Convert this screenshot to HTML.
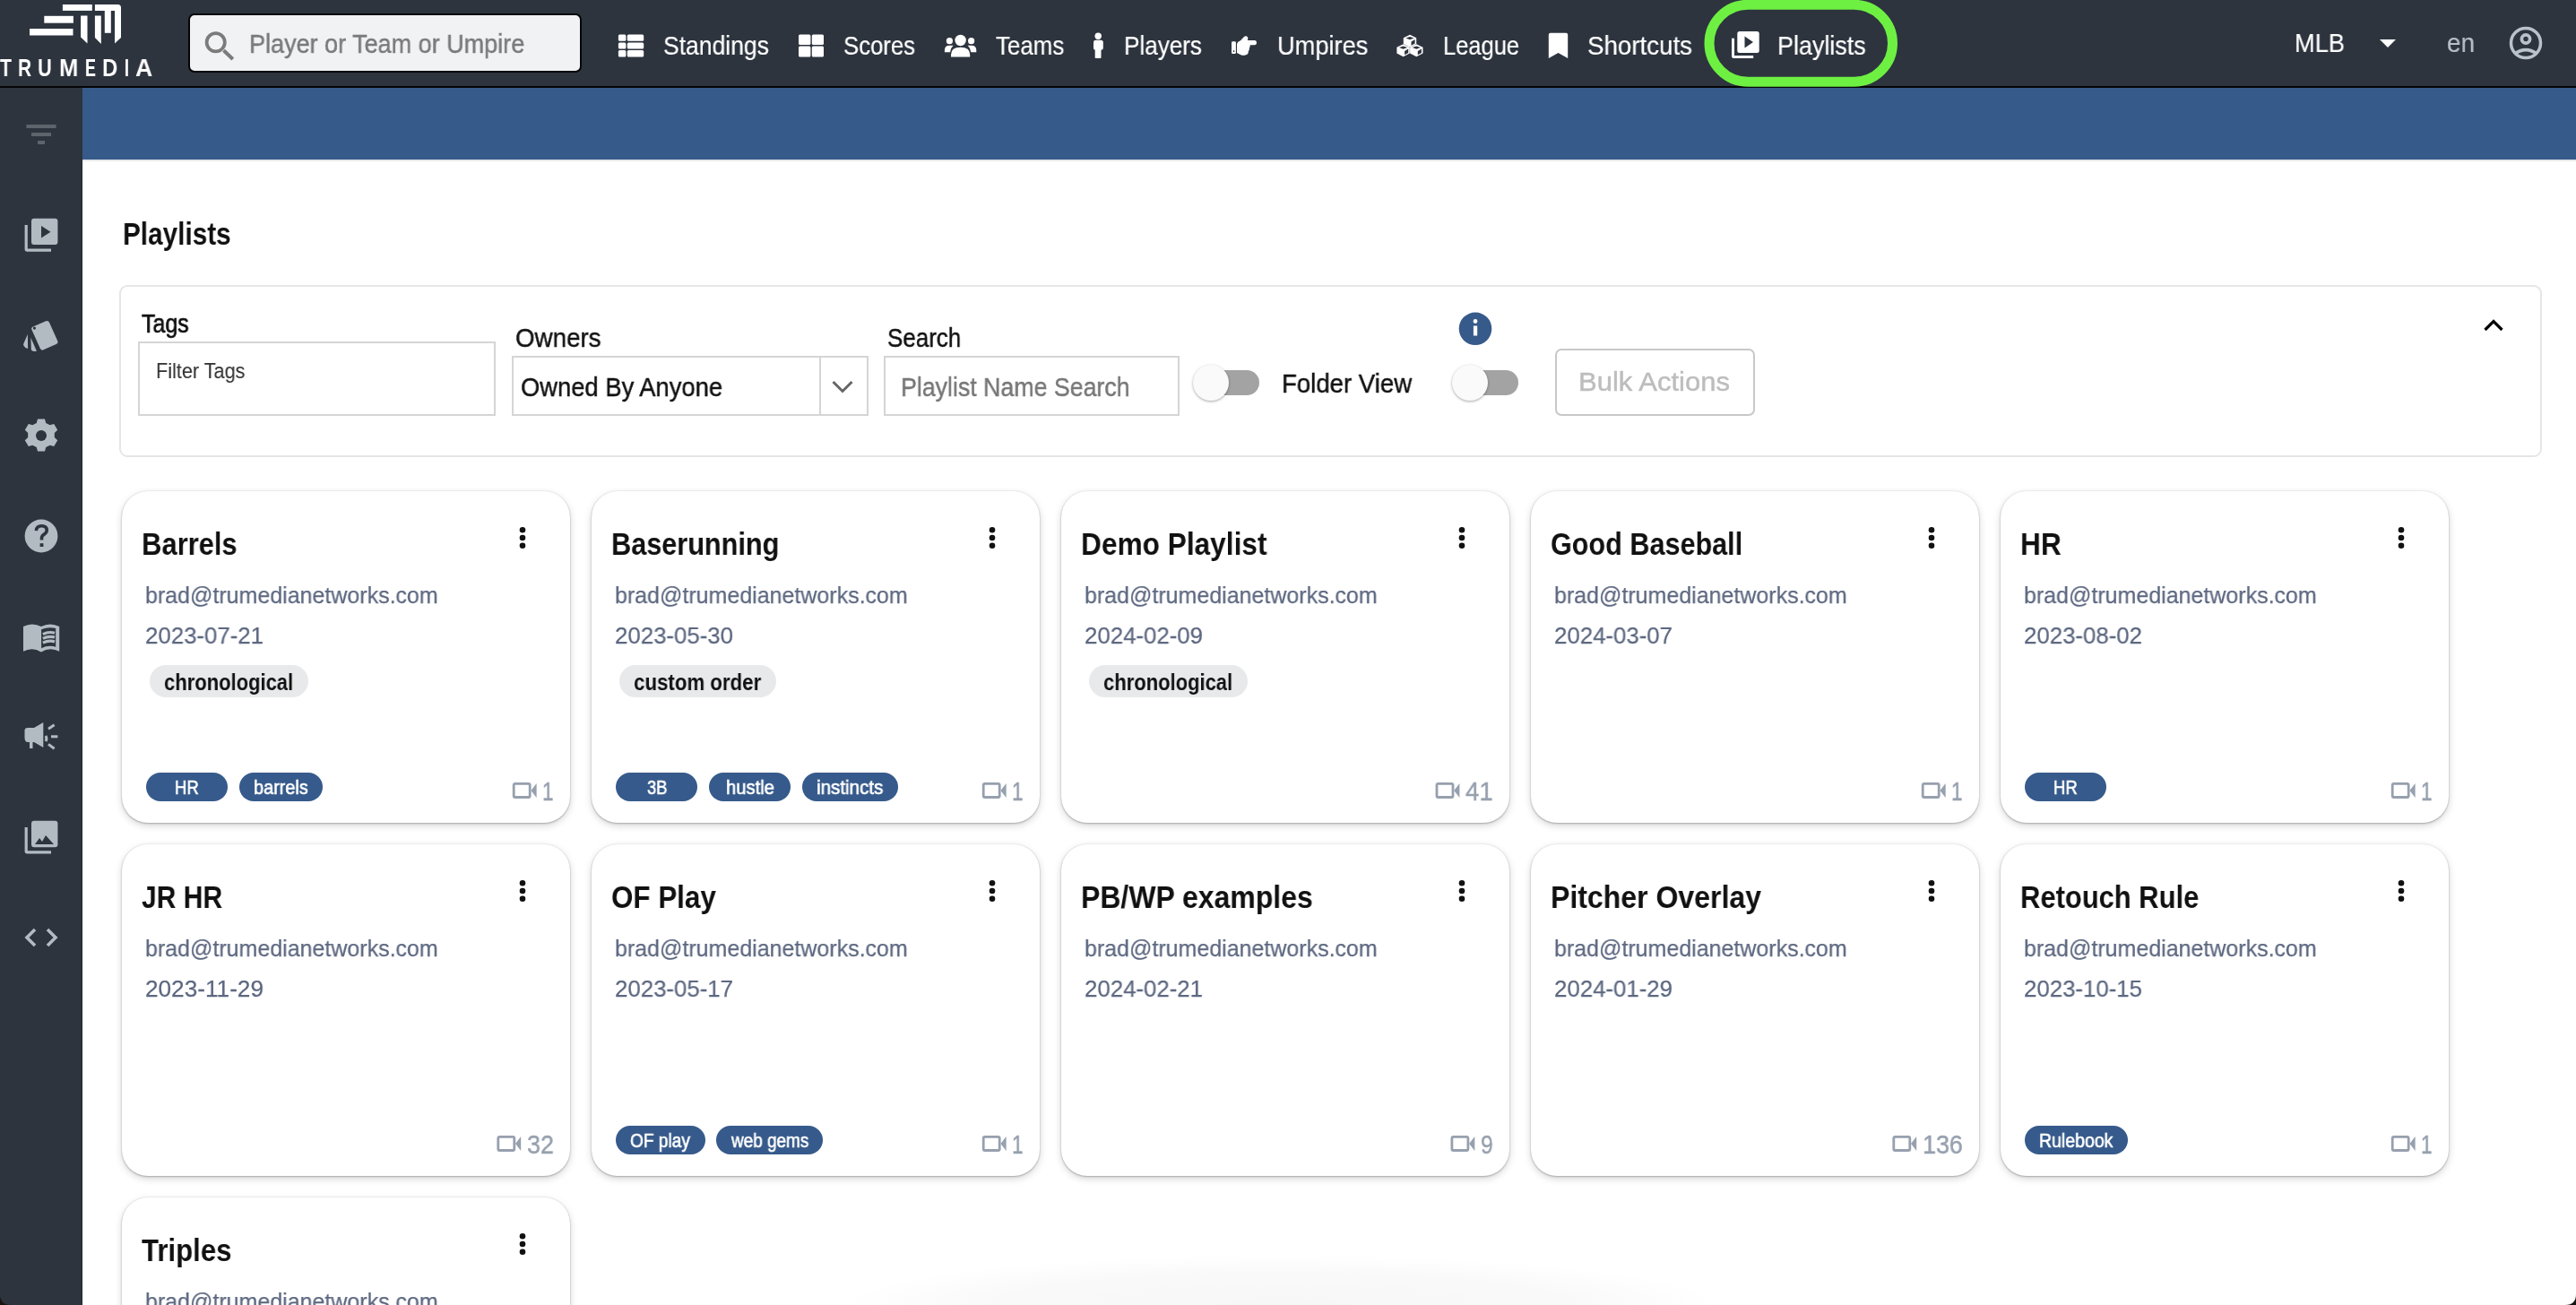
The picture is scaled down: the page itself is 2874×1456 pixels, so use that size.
<!DOCTYPE html><html><head><meta charset="utf-8"><style>
html,body{margin:0;padding:0;}
body{width:2874px;height:1456px;position:relative;overflow:hidden;background:#fff;font-family:"Liberation Sans",sans-serif;}
.t{position:absolute;white-space:nowrap;transform-origin:0 0;will-change:transform;}
.a{position:absolute;}
svg{position:absolute;overflow:visible;}
.card{position:absolute;width:500px;height:370px;border-radius:29px;background:#fff;box-shadow:0 1px 2px rgba(0,0,0,0.22),0 3px 9px rgba(0,0,0,0.17),0 0 2px rgba(0,0,0,0.12);}
.chip{position:absolute;height:32px;border-radius:16px;background:#365a8b;}
.ochip{position:absolute;height:36px;border-radius:18px;background:#e8e9eb;}
</style></head><body>

<div class="a" style="left:0;top:0;width:2874px;height:96px;background:#2d343e"></div>
<div class="a" style="left:0;top:96px;width:2874px;height:2px;background:#050505"></div>
<div class="a" style="left:0;top:98px;width:92px;height:1358px;background:#2d343e"></div>
<div class="a" style="left:91px;top:178px;width:1px;height:1278px;background:#1f2630"></div>
<div class="a" style="left:92px;top:98px;width:2782px;height:80px;background:#365a8a"></div>
<div class="a" style="left:92px;top:178px;width:2782px;height:2px;background:#e8e8e8"></div>
<svg style="left:0;top:0" width="180" height="96" viewBox="0 0 180 96">
<g fill="#fff">
<rect x="69.9" y="5" width="32.9" height="6.9"/>
<rect x="49.3" y="17.8" width="32.6" height="7.9"/>
<rect x="33" y="32" width="48.5" height="7.5"/>
<polygon points="90.1,17.4 97.5,17.4 97.5,48.6 90.1,41.6"/>
<polygon points="105.9,17.4 112.8,17.4 112.8,48.9 105.9,41.9"/>
<path d="M105.9,5 H131.5 Q135,5 135,8.5 V41.9 L128,48.6 V11.9 H105.9 Z"/>
<rect x="116.8" y="11.9" width="7" height="24.9"/>
</g>

</svg>
<div class="t" style="left:0.00px;top:62.00px;font-size:28px;line-height:28px;color:#fff;font-weight:bold;transform:scaleX(0.7544);">T</div>
<div class="t" style="left:19.50px;top:62.00px;font-size:28px;line-height:28px;color:#fff;font-weight:bold;transform:scaleX(0.7475);">R</div>
<div class="t" style="left:42.00px;top:62.00px;font-size:28px;line-height:28px;color:#fff;font-weight:bold;transform:scaleX(0.7772);">U</div>
<div class="t" style="left:65.70px;top:62.00px;font-size:28px;line-height:28px;color:#fff;font-weight:bold;transform:scaleX(0.9142);">M</div>
<div class="t" style="left:95.10px;top:62.00px;font-size:28px;line-height:28px;color:#fff;font-weight:bold;transform:scaleX(0.6364);">E</div>
<div class="t" style="left:114.40px;top:62.00px;font-size:28px;line-height:28px;color:#fff;font-weight:bold;transform:scaleX(0.8564);">D</div>
<div class="t" style="left:139.00px;top:62.00px;font-size:28px;line-height:28px;color:#fff;font-weight:bold;transform:scaleX(0.6154);">I</div>
<div class="t" style="left:150.80px;top:62.00px;font-size:28px;line-height:28px;color:#fff;font-weight:bold;transform:scaleX(0.9505);">A</div>
<div class="a" style="left:210px;top:15px;width:435px;height:62px;border:2px solid #050505;border-radius:7px;background:#f1f2f4"></div>
<svg style="left:0;top:0" width="10" height="10">
<circle cx="240.7" cy="47.3" r="10.1" fill="none" stroke="#7b7b7b" stroke-width="3.7"/>
<line x1="249.5" y1="56.3" x2="259.8" y2="66" stroke="#7b7b7b" stroke-width="4"/>
</svg>
<div class="t" style="left:277.80px;top:34.00px;font-size:29.5px;line-height:29.5px;color:#7a7a7a;-webkit-text-stroke:0.45px #7a7a7a;transform:scaleX(0.9156);">Player or Team or Umpire</div>
<svg style="left:0;top:0" width="10" height="10"><g fill="#ffffff">
<rect x="689.9" y="38.6" width="8.5" height="7.1" rx="1.5"/><rect x="699.8" y="38.6" width="18.4" height="7.1" rx="1.5"/>
<rect x="689.9" y="47.4" width="8.5" height="7.1" rx="1.5"/><rect x="699.8" y="47.4" width="18.4" height="7.1" rx="1.5"/>
<rect x="689.9" y="56.1" width="8.5" height="7.3" rx="1.5"/><rect x="699.8" y="56.1" width="18.4" height="7.3" rx="1.5"/>
<rect x="891" y="38.6" width="13.4" height="11.4" rx="1.5"/><rect x="905.8" y="38.6" width="13.2" height="11.4" rx="1.5"/>
<rect x="891" y="51.6" width="13.4" height="11.8" rx="1.5"/><rect x="905.8" y="51.6" width="13.2" height="11.8" rx="1.5"/>
<circle cx="1071.6" cy="45" r="6.2"/><circle cx="1059.4" cy="45.7" r="3.6"/><circle cx="1083.6" cy="45.7" r="3.6"/>
<path d="M1061,63.6 V61 Q1061,52.8 1071.6,52.8 Q1082.2,52.8 1082.2,61 V63.6 Z"/>
<path d="M1053.9,58.3 V56 Q1053.9,50.7 1059.5,50.7 L1063.5,50.7 Q1060.5,53.5 1060,58.3 Z"/>
<path d="M1089.3,58.3 V56 Q1089.3,50.7 1083.7,50.7 L1079.7,50.7 Q1082.7,53.5 1083.2,58.3 Z"/>
<circle cx="1225.2" cy="40.2" r="3.7"/>
<rect x="1220" y="44.7" width="10.8" height="11.1" rx="2.5"/><rect x="1221.7" y="50" width="6.8" height="14.9" rx="1"/>
<rect x="1374" y="46.3" width="4.9" height="13.6" rx="1.2"/>
<path d="M1380,49 Q1380.5,46.5 1384,45.3 L1388,41 Q1389.5,39.7 1391,40.4 Q1393.2,41.8 1391.8,45 L1400,45 Q1402,45.2 1402,47.6 Q1402,50.2 1399.5,50.2 L1394.7,50.2 Q1395,52.5 1393.8,53.8 Q1394.2,56 1392.8,57.2 Q1393,60.5 1390,61.3 Q1387.5,62.2 1385,61.5 L1380,59 Z"/>
<path d="M1727.8,38.7 Q1727.8,36.7 1729.8,36.7 H1747.2 Q1749.2,36.7 1749.2,38.7 V64.9 L1738.5,58.9 L1727.8,64.9 Z"/>
<rect x="1938.3" y="35" width="24.4" height="23.9" rx="2.5"/>
<path d="M1932,42.7 h3 v19.2 h21.2 v3 h-21.7 q-2.5,0 -2.5,-2.5 z"/>
</g>
<circle cx="1376.5" cy="57.1" r="0.9" fill="#2d343e"/>
<polygon points="1946.5,40.5 1946.5,53.5 1956,47" fill="#2d343e"/>
<polygon points="1573,38.7 1580.2,42.300000000000004 1580.2,49.1 1573,52.7 1565.8,49.1 1565.8,42.300000000000004" fill="#fff"/><polygon points="1568.4,42.6 1573,41.0 1577.6,42.6 1573,44.300000000000004" fill="#2d343e"/><polygon points="1574.5,46.400000000000006 1578.6,44.1 1578.6,48.6 1574.5,50.7" fill="#2d343e"/><polygon points="1565.6,49.2 1572.8,52.800000000000004 1572.8,59.6 1565.6,63.2 1558.3999999999999,59.6 1558.3999999999999,52.800000000000004" fill="#fff"/><polygon points="1561.0,53.1 1565.6,51.5 1570.1999999999998,53.1 1565.6,54.800000000000004" fill="#2d343e"/><polygon points="1567.1,56.900000000000006 1571.1999999999998,54.6 1571.1999999999998,59.1 1567.1,61.2" fill="#2d343e"/><polygon points="1580.3,49.2 1587.5,52.800000000000004 1587.5,59.6 1580.3,63.2 1573.1,59.6 1573.1,52.800000000000004" fill="#fff"/><polygon points="1575.7,53.1 1580.3,51.5 1584.8999999999999,53.1 1580.3,54.800000000000004" fill="#2d343e"/><polygon points="1581.8,56.900000000000006 1585.8999999999999,54.6 1585.8999999999999,59.1 1581.8,61.2" fill="#2d343e"/>
<rect x="1907" y="5.3" width="204.5" height="86" rx="43" fill="none" stroke="#6ef043" stroke-width="11"/>
<polygon points="2655,44 2673,44 2664,53" fill="#fff"/>
<circle cx="2818" cy="48" r="16.5" fill="none" stroke="#b9c2ca" stroke-width="3.5"/>
<circle cx="2818" cy="43.5" r="4.6" fill="none" stroke="#b9c2ca" stroke-width="3.7"/>
<path d="M2806,59.8 Q2818,51.5 2830,59.8" fill="none" stroke="#b9c2ca" stroke-width="3.5"/>
</svg>
<div class="t" style="left:739.70px;top:36.00px;font-size:29.5px;line-height:29.5px;color:#fff;-webkit-text-stroke:0.2px #fff;transform:scaleX(0.8986);">Standings</div>
<div class="t" style="left:941.00px;top:36.00px;font-size:29.5px;line-height:29.5px;color:#fff;-webkit-text-stroke:0.2px #fff;transform:scaleX(0.8715);">Scores</div>
<div class="t" style="left:1110.70px;top:36.00px;font-size:29.5px;line-height:29.5px;color:#fff;-webkit-text-stroke:0.2px #fff;transform:scaleX(0.8769);">Teams</div>
<div class="t" style="left:1253.50px;top:36.00px;font-size:29.5px;line-height:29.5px;color:#fff;-webkit-text-stroke:0.2px #fff;transform:scaleX(0.8841);">Players</div>
<div class="t" style="left:1424.70px;top:36.00px;font-size:29.5px;line-height:29.5px;color:#fff;-webkit-text-stroke:0.2px #fff;transform:scaleX(0.9226);">Umpires</div>
<div class="t" style="left:1610.00px;top:36.00px;font-size:29.5px;line-height:29.5px;color:#fff;-webkit-text-stroke:0.2px #fff;transform:scaleX(0.8638);">League</div>
<div class="t" style="left:1771.40px;top:36.00px;font-size:29.5px;line-height:29.5px;color:#fff;-webkit-text-stroke:0.2px #fff;transform:scaleX(0.9390);">Shortcuts</div>
<div class="t" style="left:1983.20px;top:36.00px;font-size:29.5px;line-height:29.5px;color:#fff;-webkit-text-stroke:0.2px #fff;transform:scaleX(0.9113);">Playlists</div>
<div class="t" style="left:2560.00px;top:34.00px;font-size:29px;line-height:29px;color:#fff;-webkit-text-stroke:0.15px #fff;transform:scaleX(0.9396);">MLB</div>
<div class="t" style="left:2730.00px;top:34.00px;font-size:29px;line-height:29px;color:#b9c2ca;-webkit-text-stroke:0.15px #b9c2ca;transform:scaleX(0.9598);">en</div>
<svg style="left:0;top:0" width="10" height="10">
<g fill="#5d646c"><rect x="29.4" y="139" width="33.2" height="4"/><rect x="35" y="148" width="22" height="4"/><rect x="42" y="157" width="8" height="4"/></g>
<g fill="#b3bbc2">
<rect x="35" y="243.7" width="29.4" height="29.3" rx="3"/>
<path d="M27.6,251 h3.2 v26.5 h26.2 v3.2 h-26.7 q-2.7,0 -2.7,-2.7 z"/>
<path d="M35.6,368.2 Q34.2,365.8 36.8,364.6 L51.2,358.3 Q53.8,357.2 55,359.7 L64.2,380.2 Q65.3,382.8 62.7,384 L48.5,390.3 Q45.9,391.4 44.8,388.8 Z"/>
<path d="M30.9,373 L31.1,389.1 Q27.5,388 26.3,385.5 Q25.8,384.3 26.6,382.8 Z"/>
<path d="M34.4,376.8 L40.9,391.8 Q37,392.2 35.6,391.2 Q34.8,390.6 34.8,389.5 Z"/>
<circle cx="46" cy="598" r="18.4"/>
<path d="M26,699 Q36,694 45.9,699 Q56,694 66.2,699 V726.8 Q56,721.5 45.9,727.4 Q36,721.5 26,726.8 Z"/>
<path d="M27.5,815 Q27.5,812 31,812 H38 L48.3,806 V834 L38,828 H36.5 V835 H33 V828 H31 Q27.5,828 27.5,823 Z"/>
<rect x="35" y="915.7" width="29.4" height="29.6" rx="3"/>
<path d="M27.6,923 h3.2 v26.3 h26.2 v3.2 h-26.7 q-2.7,0 -2.7,-2.7 z"/>
</g>
<polygon points="46,252 46,265.5 56.5,258.7" fill="#2d343e"/>
<circle cx="38.4" cy="366.1" r="1.6" fill="#2d343e"/>
<path d="M40.3,592.2 Q40.8,586.8 46.5,586.8 Q52.2,586.8 52.2,591.6 Q52.2,594.6 49,596.4 Q46.5,597.8 46.5,600.5 V602.5" fill="none" stroke="#2d343e" stroke-width="3.6"/>
<rect x="44.6" y="606.2" width="3.8" height="3.8" fill="#2d343e"/>
<path d="M46.1,702.3 Q54,698.8 62.2,701 V721.7 Q54,719.2 46.1,723.2 Z" fill="#2d343e"/>
<g stroke="#b3bbc2" stroke-width="3.2" fill="none"><path d="M47.9,707.6 Q54.5,704.2 61,706.3 M47.9,712.4 Q54.5,709 61,711.1 M47.9,717.2 Q54.5,713.8 61,715.9"/></g>
<g stroke="#b3bbc2" stroke-width="3" fill="none">
<path d="M51,821 a4,5 0 0 1 0,6" />
<line x1="54" y1="813.2" x2="60.6" y2="808.8"/><line x1="57" y1="821.8" x2="64.4" y2="821.8"/><line x1="54" y1="830.4" x2="60.6" y2="835.2"/>
<path d="M39,1037 L30,1046 L39,1055 M53,1037 L62,1046 L53,1055" stroke-width="3.6"/>
</g>
<polygon points="39,942 44,935 47,939 51,932 60,942" fill="#2d343e"/>
<g transform="translate(46,486)">
<path fill="#b3bbc2" d="M-4,-18.5 h8 l1.2,4.5 l4.5,2.3 l4.5,-1.4 l4,6.9 l-3.4,3.1 v5.2 l3.4,3.1 l-4,6.9 l-4.5,-1.4 l-4.5,2.3 l-1.2,4.5 h-8 l-1.2,-4.5 l-4.5,-2.3 l-4.5,1.4 l-4,-6.9 l3.4,-3.1 v-5.2 l-3.4,-3.1 l4,-6.9 l4.5,1.4 l4.5,-2.3 z"/>
<circle r="6" fill="#2d343e"/>
</g>
</svg>
<div class="t" style="left:137.00px;top:243.00px;font-size:35px;line-height:35px;color:#111;font-weight:bold;transform:scaleX(0.8493);">Playlists</div>
<div class="a" style="left:133px;top:317.5px;width:2698.5px;height:188.5px;border:2px solid #e6e6e6;border-radius:9px"></div>
<div class="t" style="left:158.10px;top:346.00px;font-size:29.5px;line-height:29.5px;color:#111;-webkit-text-stroke:0.7px #111;transform:scaleX(0.8459);">Tags</div>
<div class="a" style="left:154.4px;top:381.4px;width:395px;height:79px;border:2px solid #d5d5d5"></div>
<div class="t" style="left:173.70px;top:402.00px;font-size:24.5px;line-height:24.5px;color:#333;-webkit-text-stroke:0.1px #333;transform:scaleX(0.8837);">Filter Tags</div>
<div class="t" style="left:574.80px;top:362.00px;font-size:30px;line-height:30px;color:#111;-webkit-text-stroke:0.45px #111;transform:scaleX(0.9255);">Owners</div>
<div class="a" style="left:570.8px;top:397.4px;width:394.5px;height:62.8px;border:2px solid #d5d5d5"></div>
<div class="a" style="left:914px;top:399px;width:2px;height:63px;background:#d5d5d5"></div>
<svg style="left:0;top:0" width="10" height="10"><path d="M929.5,426 L940,436.5 L950.5,426" fill="none" stroke="#666" stroke-width="3"/></svg>
<div class="t" style="left:581.00px;top:417.00px;font-size:30px;line-height:30px;color:#111;-webkit-text-stroke:0.45px #111;transform:scaleX(0.9117);">Owned By Anyone</div>
<div class="t" style="left:990.40px;top:362.00px;font-size:30px;line-height:30px;color:#111;-webkit-text-stroke:0.45px #111;transform:scaleX(0.8654);">Search</div>
<div class="a" style="left:986.3px;top:397.4px;width:326px;height:62.8px;border:2px solid #d5d5d5"></div>
<div class="t" style="left:1005.00px;top:417.00px;font-size:30px;line-height:30px;color:#777;-webkit-text-stroke:0.45px #777;transform:scaleX(0.8912);">Playlist Name Search</div>
<div class="a" style="left:1346px;top:413px;width:59px;height:28px;border-radius:14px;background:#a3a3a3"></div>
<div class="a" style="left:1331px;top:406.6px;width:40px;height:40px;border-radius:20px;background:#fafafa;box-shadow:0 1px 3px rgba(0,0,0,0.35)"></div>
<div class="a" style="left:1635px;top:413px;width:59px;height:28px;border-radius:14px;background:#a3a3a3"></div>
<div class="a" style="left:1620px;top:406.6px;width:40px;height:40px;border-radius:20px;background:#fafafa;box-shadow:0 1px 3px rgba(0,0,0,0.35)"></div>
<div class="t" style="left:1430.00px;top:413.00px;font-size:30px;line-height:30px;color:#111;-webkit-text-stroke:0.45px #111;transform:scaleX(0.9196);">Folder View</div>
<svg style="left:0;top:0" width="10" height="10"><circle cx="1646" cy="366.8" r="18.3" fill="#365a8a"/><rect x="1643.9" y="363.5" width="4.3" height="11" fill="#fff"/><circle cx="1646" cy="358.5" r="2.4" fill="#fff"/></svg>
<div class="a" style="left:1734.5px;top:389.4px;width:219px;height:70.7px;border:2px solid #c8c8c8;border-radius:7px"></div>
<div class="t" style="left:1761.40px;top:411.00px;font-size:30px;line-height:30px;color:#bdbdbd;-webkit-text-stroke:0.45px #bdbdbd;transform:scaleX(1.0343);">Bulk Actions</div>
<svg style="left:0;top:0" width="10" height="10"><path d="M2772.5,368 L2782,358.5 L2791.5,368" fill="none" stroke="#000" stroke-width="3.2"/></svg>
<div class="card" style="left:136px;top:547.5px"></div>
<div class="t" style="left:158.30px;top:590.00px;font-size:35.5px;line-height:35.5px;color:#111;font-weight:bold;transform:scaleX(0.8717);">Barrels</div>
<svg style="left:0;top:0" width="10" height="10"><g fill="#111"><circle cx="583" cy="591.3" r="3.3"/><circle cx="583" cy="600.0" r="3.3"/><circle cx="583" cy="608.7" r="3.3"/></g></svg>
<div class="t" style="left:162.00px;top:651.00px;font-size:26px;line-height:26px;color:#5d6880;-webkit-text-stroke:0.25px #5d6880;transform:scaleX(0.9609);">brad@trumedianetworks.com</div>
<div class="t" style="left:162.00px;top:696.00px;font-size:26px;line-height:26px;color:#5d6880;-webkit-text-stroke:0.25px #5d6880;transform:scaleX(0.9925);">2023-07-21</div>
<div class="ochip" style="left:166.9px;top:742.0px;width:177.1px"></div>
<div class="t" style="left:183.40px;top:749.00px;font-size:25px;line-height:25px;color:#111;font-weight:bold;transform:scaleX(0.8792);">chronological</div>
<div class="chip" style="left:162.9px;top:862.0px;width:91.6px"></div>
<div class="t" style="left:195.30px;top:869.00px;font-size:21.5px;line-height:21.5px;color:#fff;-webkit-text-stroke:0.6px #fff;transform:scaleX(0.8617);">HR</div>
<div class="chip" style="left:266.7px;top:862.0px;width:93.7px"></div>
<div class="t" style="left:283.20px;top:869.00px;font-size:21.5px;line-height:21.5px;color:#fff;-webkit-text-stroke:0.6px #fff;transform:scaleX(0.9239);">barrels</div>
<div class="t" style="left:605.40px;top:868.00px;font-size:30px;line-height:30px;color:#97a0ae;-webkit-text-stroke:0.45px #97a0ae;transform:scaleX(0.7485);">1</div>
<svg style="left:0;top:0" width="10" height="10"><rect x="573.2" y="874.4" width="18" height="15.1" rx="1.6" fill="none" stroke="#97a0ae" stroke-width="2.8"/><polygon points="592.4,882.0 598.6,873.9 598.6,889.9" fill="#97a0ae"/></svg>
<div class="card" style="left:660px;top:547.5px"></div>
<div class="t" style="left:682.30px;top:590.00px;font-size:35.5px;line-height:35.5px;color:#111;font-weight:bold;transform:scaleX(0.8636);">Baserunning</div>
<svg style="left:0;top:0" width="10" height="10"><g fill="#111"><circle cx="1107" cy="591.3" r="3.3"/><circle cx="1107" cy="600.0" r="3.3"/><circle cx="1107" cy="608.7" r="3.3"/></g></svg>
<div class="t" style="left:686.00px;top:651.00px;font-size:26px;line-height:26px;color:#5d6880;-webkit-text-stroke:0.25px #5d6880;transform:scaleX(0.9609);">brad@trumedianetworks.com</div>
<div class="t" style="left:686.00px;top:696.00px;font-size:26px;line-height:26px;color:#5d6880;-webkit-text-stroke:0.25px #5d6880;transform:scaleX(0.9925);">2023-05-30</div>
<div class="ochip" style="left:690.9px;top:742.0px;width:175.3px"></div>
<div class="t" style="left:707.40px;top:749.00px;font-size:25px;line-height:25px;color:#111;font-weight:bold;transform:scaleX(0.8905);">custom order</div>
<div class="chip" style="left:686.9px;top:862.0px;width:91.6px"></div>
<div class="t" style="left:721.50px;top:869.00px;font-size:21.5px;line-height:21.5px;color:#fff;-webkit-text-stroke:0.6px #fff;transform:scaleX(0.8517);">3B</div>
<div class="chip" style="left:790.7px;top:862.0px;width:91.6px"></div>
<div class="t" style="left:809.60px;top:869.00px;font-size:21.5px;line-height:21.5px;color:#fff;-webkit-text-stroke:0.6px #fff;transform:scaleX(0.9373);">hustle</div>
<div class="chip" style="left:894.5px;top:862.0px;width:107.3px"></div>
<div class="t" style="left:911.00px;top:869.00px;font-size:21.5px;line-height:21.5px;color:#fff;-webkit-text-stroke:0.6px #fff;transform:scaleX(0.9562);">instincts</div>
<div class="t" style="left:1129.40px;top:868.00px;font-size:30px;line-height:30px;color:#97a0ae;-webkit-text-stroke:0.45px #97a0ae;transform:scaleX(0.7485);">1</div>
<svg style="left:0;top:0" width="10" height="10"><rect x="1097.2" y="874.4" width="18" height="15.1" rx="1.6" fill="none" stroke="#97a0ae" stroke-width="2.8"/><polygon points="1116.4,882.0 1122.6,873.9 1122.6,889.9" fill="#97a0ae"/></svg>
<div class="card" style="left:1184px;top:547.5px"></div>
<div class="t" style="left:1206.30px;top:590.00px;font-size:35.5px;line-height:35.5px;color:#111;font-weight:bold;transform:scaleX(0.8909);">Demo Playlist</div>
<svg style="left:0;top:0" width="10" height="10"><g fill="#111"><circle cx="1631" cy="591.3" r="3.3"/><circle cx="1631" cy="600.0" r="3.3"/><circle cx="1631" cy="608.7" r="3.3"/></g></svg>
<div class="t" style="left:1210.00px;top:651.00px;font-size:26px;line-height:26px;color:#5d6880;-webkit-text-stroke:0.25px #5d6880;transform:scaleX(0.9609);">brad@trumedianetworks.com</div>
<div class="t" style="left:1210.00px;top:696.00px;font-size:26px;line-height:26px;color:#5d6880;-webkit-text-stroke:0.25px #5d6880;transform:scaleX(0.9925);">2024-02-09</div>
<div class="ochip" style="left:1214.9px;top:742.0px;width:177.1px"></div>
<div class="t" style="left:1231.40px;top:749.00px;font-size:25px;line-height:25px;color:#111;font-weight:bold;transform:scaleX(0.8792);">chronological</div>
<div class="t" style="left:1635.20px;top:868.00px;font-size:30px;line-height:30px;color:#97a0ae;-webkit-text-stroke:0.45px #97a0ae;transform:scaleX(0.9192);">41</div>
<svg style="left:0;top:0" width="10" height="10"><rect x="1603.0" y="874.4" width="18" height="15.1" rx="1.6" fill="none" stroke="#97a0ae" stroke-width="2.8"/><polygon points="1622.2,882.0 1628.4,873.9 1628.4,889.9" fill="#97a0ae"/></svg>
<div class="card" style="left:1708px;top:547.5px"></div>
<div class="t" style="left:1730.30px;top:590.00px;font-size:35.5px;line-height:35.5px;color:#111;font-weight:bold;transform:scaleX(0.8616);">Good Baseball</div>
<svg style="left:0;top:0" width="10" height="10"><g fill="#111"><circle cx="2155" cy="591.3" r="3.3"/><circle cx="2155" cy="600.0" r="3.3"/><circle cx="2155" cy="608.7" r="3.3"/></g></svg>
<div class="t" style="left:1734.00px;top:651.00px;font-size:26px;line-height:26px;color:#5d6880;-webkit-text-stroke:0.25px #5d6880;transform:scaleX(0.9609);">brad@trumedianetworks.com</div>
<div class="t" style="left:1734.00px;top:696.00px;font-size:26px;line-height:26px;color:#5d6880;-webkit-text-stroke:0.25px #5d6880;transform:scaleX(0.9925);">2024-03-07</div>
<div class="t" style="left:2177.40px;top:868.00px;font-size:30px;line-height:30px;color:#97a0ae;-webkit-text-stroke:0.45px #97a0ae;transform:scaleX(0.7485);">1</div>
<svg style="left:0;top:0" width="10" height="10"><rect x="2145.2" y="874.4" width="18" height="15.1" rx="1.6" fill="none" stroke="#97a0ae" stroke-width="2.8"/><polygon points="2164.4,882.0 2170.6,873.9 2170.6,889.9" fill="#97a0ae"/></svg>
<div class="card" style="left:2232px;top:547.5px"></div>
<div class="t" style="left:2254.30px;top:590.00px;font-size:35.5px;line-height:35.5px;color:#111;font-weight:bold;transform:scaleX(0.8908);">HR</div>
<svg style="left:0;top:0" width="10" height="10"><g fill="#111"><circle cx="2679" cy="591.3" r="3.3"/><circle cx="2679" cy="600.0" r="3.3"/><circle cx="2679" cy="608.7" r="3.3"/></g></svg>
<div class="t" style="left:2258.00px;top:651.00px;font-size:26px;line-height:26px;color:#5d6880;-webkit-text-stroke:0.25px #5d6880;transform:scaleX(0.9609);">brad@trumedianetworks.com</div>
<div class="t" style="left:2258.00px;top:696.00px;font-size:26px;line-height:26px;color:#5d6880;-webkit-text-stroke:0.25px #5d6880;transform:scaleX(0.9925);">2023-08-02</div>
<div class="chip" style="left:2258.9px;top:862.0px;width:91.6px"></div>
<div class="t" style="left:2291.30px;top:869.00px;font-size:21.5px;line-height:21.5px;color:#fff;-webkit-text-stroke:0.6px #fff;transform:scaleX(0.8617);">HR</div>
<div class="t" style="left:2701.40px;top:868.00px;font-size:30px;line-height:30px;color:#97a0ae;-webkit-text-stroke:0.45px #97a0ae;transform:scaleX(0.7485);">1</div>
<svg style="left:0;top:0" width="10" height="10"><rect x="2669.2" y="874.4" width="18" height="15.1" rx="1.6" fill="none" stroke="#97a0ae" stroke-width="2.8"/><polygon points="2688.4,882.0 2694.6,873.9 2694.6,889.9" fill="#97a0ae"/></svg>
<div class="card" style="left:136px;top:941.5px"></div>
<div class="t" style="left:158.30px;top:984.00px;font-size:35.5px;line-height:35.5px;color:#111;font-weight:bold;transform:scaleX(0.8451);">JR HR</div>
<svg style="left:0;top:0" width="10" height="10"><g fill="#111"><circle cx="583" cy="985.3" r="3.3"/><circle cx="583" cy="994.0" r="3.3"/><circle cx="583" cy="1002.7" r="3.3"/></g></svg>
<div class="t" style="left:162.00px;top:1045.00px;font-size:26px;line-height:26px;color:#5d6880;-webkit-text-stroke:0.25px #5d6880;transform:scaleX(0.9609);">brad@trumedianetworks.com</div>
<div class="t" style="left:162.00px;top:1090.00px;font-size:26px;line-height:26px;color:#5d6880;-webkit-text-stroke:0.25px #5d6880;transform:scaleX(1.0069);">2023-11-29</div>
<div class="t" style="left:588.00px;top:1262.00px;font-size:30px;line-height:30px;color:#97a0ae;-webkit-text-stroke:0.45px #97a0ae;transform:scaleX(0.8952);">32</div>
<svg style="left:0;top:0" width="10" height="10"><rect x="555.8" y="1268.4" width="18" height="15.1" rx="1.6" fill="none" stroke="#97a0ae" stroke-width="2.8"/><polygon points="575.0,1276.0 581.2,1267.9 581.2,1283.9" fill="#97a0ae"/></svg>
<div class="card" style="left:660px;top:941.5px"></div>
<div class="t" style="left:682.30px;top:984.00px;font-size:35.5px;line-height:35.5px;color:#111;font-weight:bold;transform:scaleX(0.8835);">OF Play</div>
<svg style="left:0;top:0" width="10" height="10"><g fill="#111"><circle cx="1107" cy="985.3" r="3.3"/><circle cx="1107" cy="994.0" r="3.3"/><circle cx="1107" cy="1002.7" r="3.3"/></g></svg>
<div class="t" style="left:686.00px;top:1045.00px;font-size:26px;line-height:26px;color:#5d6880;-webkit-text-stroke:0.25px #5d6880;transform:scaleX(0.9609);">brad@trumedianetworks.com</div>
<div class="t" style="left:686.00px;top:1090.00px;font-size:26px;line-height:26px;color:#5d6880;-webkit-text-stroke:0.25px #5d6880;transform:scaleX(0.9925);">2023-05-17</div>
<div class="chip" style="left:686.9px;top:1256.0px;width:99.9px"></div>
<div class="t" style="left:703.40px;top:1263.00px;font-size:21.5px;line-height:21.5px;color:#fff;-webkit-text-stroke:0.6px #fff;transform:scaleX(0.8884);">OF play</div>
<div class="chip" style="left:799.0px;top:1256.0px;width:119.4px"></div>
<div class="t" style="left:815.59px;top:1263.00px;font-size:21.5px;line-height:21.5px;color:#fff;-webkit-text-stroke:0.6px #fff;transform:scaleX(0.8807);">web gems</div>
<div class="t" style="left:1129.40px;top:1262.00px;font-size:30px;line-height:30px;color:#97a0ae;-webkit-text-stroke:0.45px #97a0ae;transform:scaleX(0.7485);">1</div>
<svg style="left:0;top:0" width="10" height="10"><rect x="1097.2" y="1268.4" width="18" height="15.1" rx="1.6" fill="none" stroke="#97a0ae" stroke-width="2.8"/><polygon points="1116.4,1276.0 1122.6,1267.9 1122.6,1283.9" fill="#97a0ae"/></svg>
<div class="card" style="left:1184px;top:941.5px"></div>
<div class="t" style="left:1206.30px;top:984.00px;font-size:35.5px;line-height:35.5px;color:#111;font-weight:bold;transform:scaleX(0.9001);">PB/WP examples</div>
<svg style="left:0;top:0" width="10" height="10"><g fill="#111"><circle cx="1631" cy="985.3" r="3.3"/><circle cx="1631" cy="994.0" r="3.3"/><circle cx="1631" cy="1002.7" r="3.3"/></g></svg>
<div class="t" style="left:1210.00px;top:1045.00px;font-size:26px;line-height:26px;color:#5d6880;-webkit-text-stroke:0.25px #5d6880;transform:scaleX(0.9609);">brad@trumedianetworks.com</div>
<div class="t" style="left:1210.00px;top:1090.00px;font-size:26px;line-height:26px;color:#5d6880;-webkit-text-stroke:0.25px #5d6880;transform:scaleX(0.9925);">2024-02-21</div>
<div class="t" style="left:1652.10px;top:1262.00px;font-size:30px;line-height:30px;color:#97a0ae;-webkit-text-stroke:0.45px #97a0ae;transform:scaleX(0.8263);">9</div>
<svg style="left:0;top:0" width="10" height="10"><rect x="1619.9" y="1268.4" width="18" height="15.1" rx="1.6" fill="none" stroke="#97a0ae" stroke-width="2.8"/><polygon points="1639.1,1276.0 1645.3,1267.9 1645.3,1283.9" fill="#97a0ae"/></svg>
<div class="card" style="left:1708px;top:941.5px"></div>
<div class="t" style="left:1730.30px;top:984.00px;font-size:35.5px;line-height:35.5px;color:#111;font-weight:bold;transform:scaleX(0.9021);">Pitcher Overlay</div>
<svg style="left:0;top:0" width="10" height="10"><g fill="#111"><circle cx="2155" cy="985.3" r="3.3"/><circle cx="2155" cy="994.0" r="3.3"/><circle cx="2155" cy="1002.7" r="3.3"/></g></svg>
<div class="t" style="left:1734.00px;top:1045.00px;font-size:26px;line-height:26px;color:#5d6880;-webkit-text-stroke:0.25px #5d6880;transform:scaleX(0.9609);">brad@trumedianetworks.com</div>
<div class="t" style="left:1734.00px;top:1090.00px;font-size:26px;line-height:26px;color:#5d6880;-webkit-text-stroke:0.25px #5d6880;transform:scaleX(0.9925);">2024-01-29</div>
<div class="t" style="left:2145.00px;top:1262.00px;font-size:30px;line-height:30px;color:#97a0ae;-webkit-text-stroke:0.45px #97a0ae;transform:scaleX(0.8962);">136</div>
<svg style="left:0;top:0" width="10" height="10"><rect x="2112.8" y="1268.4" width="18" height="15.1" rx="1.6" fill="none" stroke="#97a0ae" stroke-width="2.8"/><polygon points="2132.0,1276.0 2138.2,1267.9 2138.2,1283.9" fill="#97a0ae"/></svg>
<div class="card" style="left:2232px;top:941.5px"></div>
<div class="t" style="left:2254.30px;top:984.00px;font-size:35.5px;line-height:35.5px;color:#111;font-weight:bold;transform:scaleX(0.8711);">Retouch Rule</div>
<svg style="left:0;top:0" width="10" height="10"><g fill="#111"><circle cx="2679" cy="985.3" r="3.3"/><circle cx="2679" cy="994.0" r="3.3"/><circle cx="2679" cy="1002.7" r="3.3"/></g></svg>
<div class="t" style="left:2258.00px;top:1045.00px;font-size:26px;line-height:26px;color:#5d6880;-webkit-text-stroke:0.25px #5d6880;transform:scaleX(0.9609);">brad@trumedianetworks.com</div>
<div class="t" style="left:2258.00px;top:1090.00px;font-size:26px;line-height:26px;color:#5d6880;-webkit-text-stroke:0.25px #5d6880;transform:scaleX(0.9925);">2023-10-15</div>
<div class="chip" style="left:2258.9px;top:1256.0px;width:115.4px"></div>
<div class="t" style="left:2275.40px;top:1263.00px;font-size:21.5px;line-height:21.5px;color:#fff;-webkit-text-stroke:0.6px #fff;transform:scaleX(0.9065);">Rulebook</div>
<div class="t" style="left:2701.40px;top:1262.00px;font-size:30px;line-height:30px;color:#97a0ae;-webkit-text-stroke:0.45px #97a0ae;transform:scaleX(0.7485);">1</div>
<svg style="left:0;top:0" width="10" height="10"><rect x="2669.2" y="1268.4" width="18" height="15.1" rx="1.6" fill="none" stroke="#97a0ae" stroke-width="2.8"/><polygon points="2688.4,1276.0 2694.6,1267.9 2694.6,1283.9" fill="#97a0ae"/></svg>
<div class="card" style="left:136px;top:1335.5px"></div>
<div class="t" style="left:158.30px;top:1378.00px;font-size:35.5px;line-height:35.5px;color:#111;font-weight:bold;transform:scaleX(0.8776);">Triples</div>
<svg style="left:0;top:0" width="10" height="10"><g fill="#111"><circle cx="583" cy="1379.3" r="3.3"/><circle cx="583" cy="1388.0" r="3.3"/><circle cx="583" cy="1396.7" r="3.3"/></g></svg>
<div class="t" style="left:162.00px;top:1439.00px;font-size:26px;line-height:26px;color:#5d6880;-webkit-text-stroke:0.25px #5d6880;transform:scaleX(0.9609);">brad@trumedianetworks.com</div>
<div class="a" style="left:930px;top:1400px;width:1000px;height:112px;border-radius:50%;background:radial-gradient(ellipse at center, rgba(0,0,0,0.03) 0%, rgba(0,0,0,0.022) 45%, rgba(0,0,0,0) 70%)"></div>
<svg style="left:0;top:0" width="10" height="10"><path d="M0,1444 Q0,1456 12,1456 H0 Z" fill="#1a1410"/><path d="M2874,1444 Q2874,1456 2862,1456 H2874 Z" fill="#1a1410"/></svg>
</body></html>
